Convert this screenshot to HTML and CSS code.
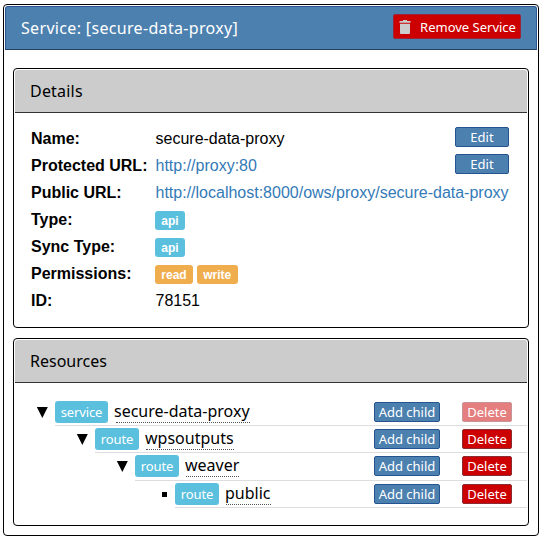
FILE: index.html
```html
<!DOCTYPE html>
<html lang="en">
<head>
<meta charset="utf-8">
<title>Service</title>
<link rel="stylesheet" href="styles.css">
</head>
<body>
<main class="service">
  <header class="service-header">
    <h1>Service: [secure-data-proxy]</h1>
    <button class="button danger remove">
      <svg class="trash" width="12" height="14" viewBox="0 0 12 14"><path d="M4 0h4v1h3.5v1.8H.5V1H4zM1 3.8h10V13q0 1-1 1H2q-1 0-1-1z"/></svg>
      <span>Remove Service</span>
    </button>
  </header>
  <section class="panel details">
    <h2>Details</h2>
    <div class="rows">
      <div class="row"><b>Name:</b><span class="value">secure-data-proxy</span><button class="button edit">Edit</button></div>
      <div class="row"><b>Protected URL:</b><a class="value">http://proxy:80</a><button class="button edit">Edit</button></div>
      <div class="row"><b>Public URL:</b><a class="value">http://localhost:8000/ows/proxy/secure-data-proxy</a></div>
      <div class="row"><b>Type:</b><span class="label">api</span></div>
      <div class="row"><b>Sync Type:</b><span class="label">api</span></div>
      <div class="row"><b>Permissions:</b><span class="label warning">read</span><span class="label warning">write</span></div>
      <div class="row"><b>ID:</b><span class="value">78151</span></div>
    </div>
  </section>
  <section class="panel resources">
    <h2>Resources</h2>
    <div class="tree">
      <div class="node level-0"><svg class="marker" width="12" height="12" viewBox="0 0 12 12"><path d="M.8 1h11L6.3 12z"/></svg><div class="item"><span class="kind root-kind">service</span><span class="name root">secure-data-proxy</span><button class="button add">Add child</button><button class="button danger disabled">Delete</button></div></div>
      <div class="node level-1"><svg class="marker" width="12" height="12" viewBox="0 0 12 12"><path d="M.8 1h11L6.3 12z"/></svg><div class="item"><span class="kind">route</span><span class="name">wpsoutputs</span><button class="button add">Add child</button><button class="button danger">Delete</button></div></div>
      <div class="node level-2"><svg class="marker" width="12" height="12" viewBox="0 0 12 12"><path d="M.8 1h11L6.3 12z"/></svg><div class="item"><span class="kind">route</span><span class="name">weaver</span><button class="button add">Add child</button><button class="button danger">Delete</button></div></div>
      <div class="node level-3"><svg class="marker" width="12" height="12" viewBox="0 0 12 12"><path d="M6 4h5v5H6z"/></svg><div class="item"><span class="kind">route</span><span class="name">public</span><button class="button add">Add child</button><button class="button danger">Delete</button></div></div>
    </div>
  </section>
</main>
</body>
</html>
```

FILE: styles.css
```css
* { box-sizing: border-box; }
body { margin: 0; background: #fff; color: #000; font: 16px "Noto Sans", sans-serif; }
.service { width: 536px; height: 532px; margin: 4px 0 0 3px; padding: 1px; border: 1px solid #000; border-radius: 4px; }
.service-header { display: flex; justify-content: space-between; height: 44px; padding: 7px 15px 0; background: #4c80af; border: 1px solid #2a5591; border-bottom-color: #223f5c; border-radius: 3px 3px 0 0; }
h1, h2 { margin: 0; font-size: 16px; font-weight: 400; }
h1 { color: #fff; line-height: 28px; letter-spacing: .33px; }
.button { display: flex; align-items: center; justify-content: center; flex: none; height: 20px; padding: 0; border: 1px solid #255390; border-radius: 2px; background: #4c80af; color: #fff; font: 13px/18px "Noto Sans", sans-serif; white-space: nowrap; }
.danger { width: 50px; background: #c00; border-color: #8b2c32; }
.disabled { opacity: .5; }
.remove { width: 128px; height: 25px; gap: 9px; padding-left: 1px; border-color: #9b2537; }
.trash { fill: #ccc; }
.panel { margin: 18px 8px 0; padding: 1px; border: 1px solid #000; border-radius: 4px; }
.details { height: 260px; }
.resources { height: 188px; margin-top: 10px; }
h2 { height: 43px; padding-left: 15px; line-height: 42px; background: #ccc; border-bottom: 1px solid #333; border-radius: 3px 3px 0 0; }
.details h2 { letter-spacing: .2px; }
.rows { padding: 12px 18px 0 16px; font-family: "Liberation Sans", sans-serif; }
.row { display: flex; align-items: center; height: 27px; }
.row b { width: 124px; flex: none; }
.value { margin-left: .5px; white-space: nowrap; }
a.value { color: #337ab7; }
.edit { width: 54px; margin: -3px 0 0 auto; }
.label { height: 19px; padding: 0 6.3px; margin: 2px 4px 0 0; border-radius: 3px; background: #5bc0de; color: #fff; font-size: 12px; font-weight: 700; line-height: 20px; }
.warning { background: #f0ad4e; }
.tree { padding-top: 16px; }
.node { display: flex; height: 27px; }
.level-0 { padding-left: 21px; }
.level-1 { padding-left: 61px; }
.level-2 { padding-left: 101px; height: 28px; }
.level-3 { padding-left: 141px; }
.marker { flex: none; margin: 7px 8px 0 0; }
.item { display: flex; flex: 1; margin-left: -1px; padding: 2px 15px 0 0; border-bottom: 1px solid #ddd; }
.kind { width: 44px; height: 22px; border-radius: 3px; background: #5bc0de; color: #fff; font-size: 13px; line-height: 22px; text-align: center; letter-spacing: -.15px; }
.root-kind { width: 53px; }
.name { height: 22px; margin: 0 auto 0 7px; line-height: 20px; text-indent: -1px; border-bottom: 1px dotted #555; }
.root { margin-left: 8px; text-indent: -2px; }
.item .button { margin-top: 1px; }
.add { width: 66px; margin-right: 22px; }
```
